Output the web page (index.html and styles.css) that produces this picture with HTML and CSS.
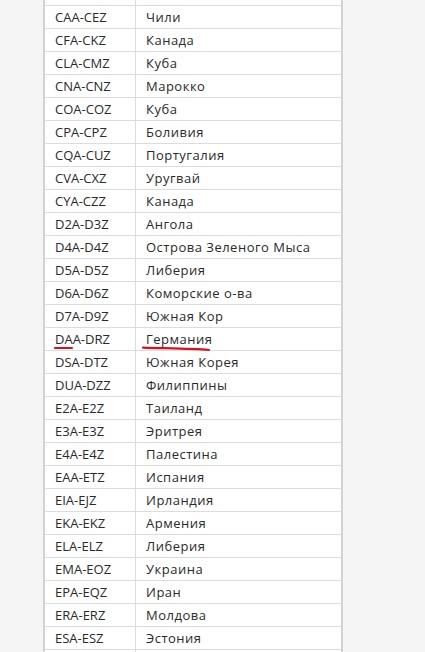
FILE: index.html
```html
<!DOCTYPE html>
<html lang="ru">
<head>
<meta charset="utf-8">
<link rel="stylesheet" href="styles.css">
</head>
<body>
<div class="page">
  <div class="sheet">
    <table class="codes">
      <tbody>
        <tr><td class="blank"></td><td class="blank"></td></tr>
        <tr><td>CAA-CEZ</td><td>Чили</td></tr>
        <tr><td>CFA-CKZ</td><td>Канада</td></tr>
        <tr><td>CLA-CMZ</td><td>Куба</td></tr>
        <tr><td>CNA-CNZ</td><td>Марокко</td></tr>
        <tr><td>COA-COZ</td><td>Куба</td></tr>
        <tr><td>CPA-CPZ</td><td>Боливия</td></tr>
        <tr><td>CQA-CUZ</td><td>Португалия</td></tr>
        <tr><td>CVA-CXZ</td><td>Уругвай</td></tr>
        <tr><td>CYA-CZZ</td><td>Канада</td></tr>
        <tr><td>D2A-D3Z</td><td>Ангола</td></tr>
        <tr><td>D4A-D4Z</td><td>Острова Зеленого Мыса</td></tr>
        <tr><td>D5A-D5Z</td><td>Либерия</td></tr>
        <tr><td>D6A-D6Z</td><td>Коморские о-ва</td></tr>
        <tr><td>D7A-D9Z</td><td>Южная Кор</td></tr>
        <tr><td>DAA-DRZ</td><td>Германия</td></tr>
        <tr><td>DSA-DTZ</td><td>Южная Корея</td></tr>
        <tr><td>DUA-DZZ</td><td>Филиппины</td></tr>
        <tr><td>E2A-E2Z</td><td>Таиланд</td></tr>
        <tr><td>E3A-E3Z</td><td>Эритрея</td></tr>
        <tr><td>E4A-E4Z</td><td>Палестина</td></tr>
        <tr><td>EAA-ETZ</td><td>Испания</td></tr>
        <tr><td>EIA-EJZ</td><td>Ирландия</td></tr>
        <tr><td>EKA-EKZ</td><td>Армения</td></tr>
        <tr><td>ELA-ELZ</td><td>Либерия</td></tr>
        <tr><td>EMA-EOZ</td><td>Украина</td></tr>
        <tr><td>EPA-EQZ</td><td>Иран</td></tr>
        <tr><td>ERA-ERZ</td><td>Молдова</td></tr>
        <tr><td>ESA-ESZ</td><td>Эстония</td></tr>
        <tr><td class="blank"></td><td class="blank"></td></tr>
      </tbody>
    </table>
    <svg class="marks" width="300" height="20" viewBox="0 0 300 20">
      <path d="M12 6 L29 6" stroke="#d8121b" stroke-width="2.2" fill="none" stroke-linecap="round"/>
      <path d="M100 5.6 C 125 6.4, 150 6.6, 166 8" stroke="#d8121b" stroke-width="2.2" fill="none" stroke-linecap="round"/>
    </svg>
  </div>
</div>
</body>
</html>
```

FILE: styles.css
```css
html, body {
  margin: 0;
  padding: 0;
  background: #f5f5f5;
  height: 100%;
  overflow: hidden;
}

.page {
  padding-left: 43px;
}

.sheet {
  position: relative;
  width: 300px;
  margin-top: -17px;
}

.codes {
  width: 300px;
  border-collapse: separate;
  border-spacing: 0;
  background: #fff;
  border-left: 2px solid #d2d2d2;
  border-right: 2px solid #d2d2d2;
  font-family: "Open Sans", "DejaVu Sans", sans-serif;
  font-size: 13px;
  color: #2a2a2a;
  table-layout: fixed;
}

.codes td {
  height: 21px;
  padding: 1px 0 0 10px;
  line-height: 21px;
  border-bottom: 1px solid #dcdcdc;
  white-space: nowrap;
  vertical-align: middle;
}

.codes td:first-child {
  width: 80px;
  border-right: 1px solid #dcdcdc;
}

.codes td:last-child {
  letter-spacing: 0.5px;
}

.marks {
  position: absolute;
  left: 0;
  top: 359px;
}
```
